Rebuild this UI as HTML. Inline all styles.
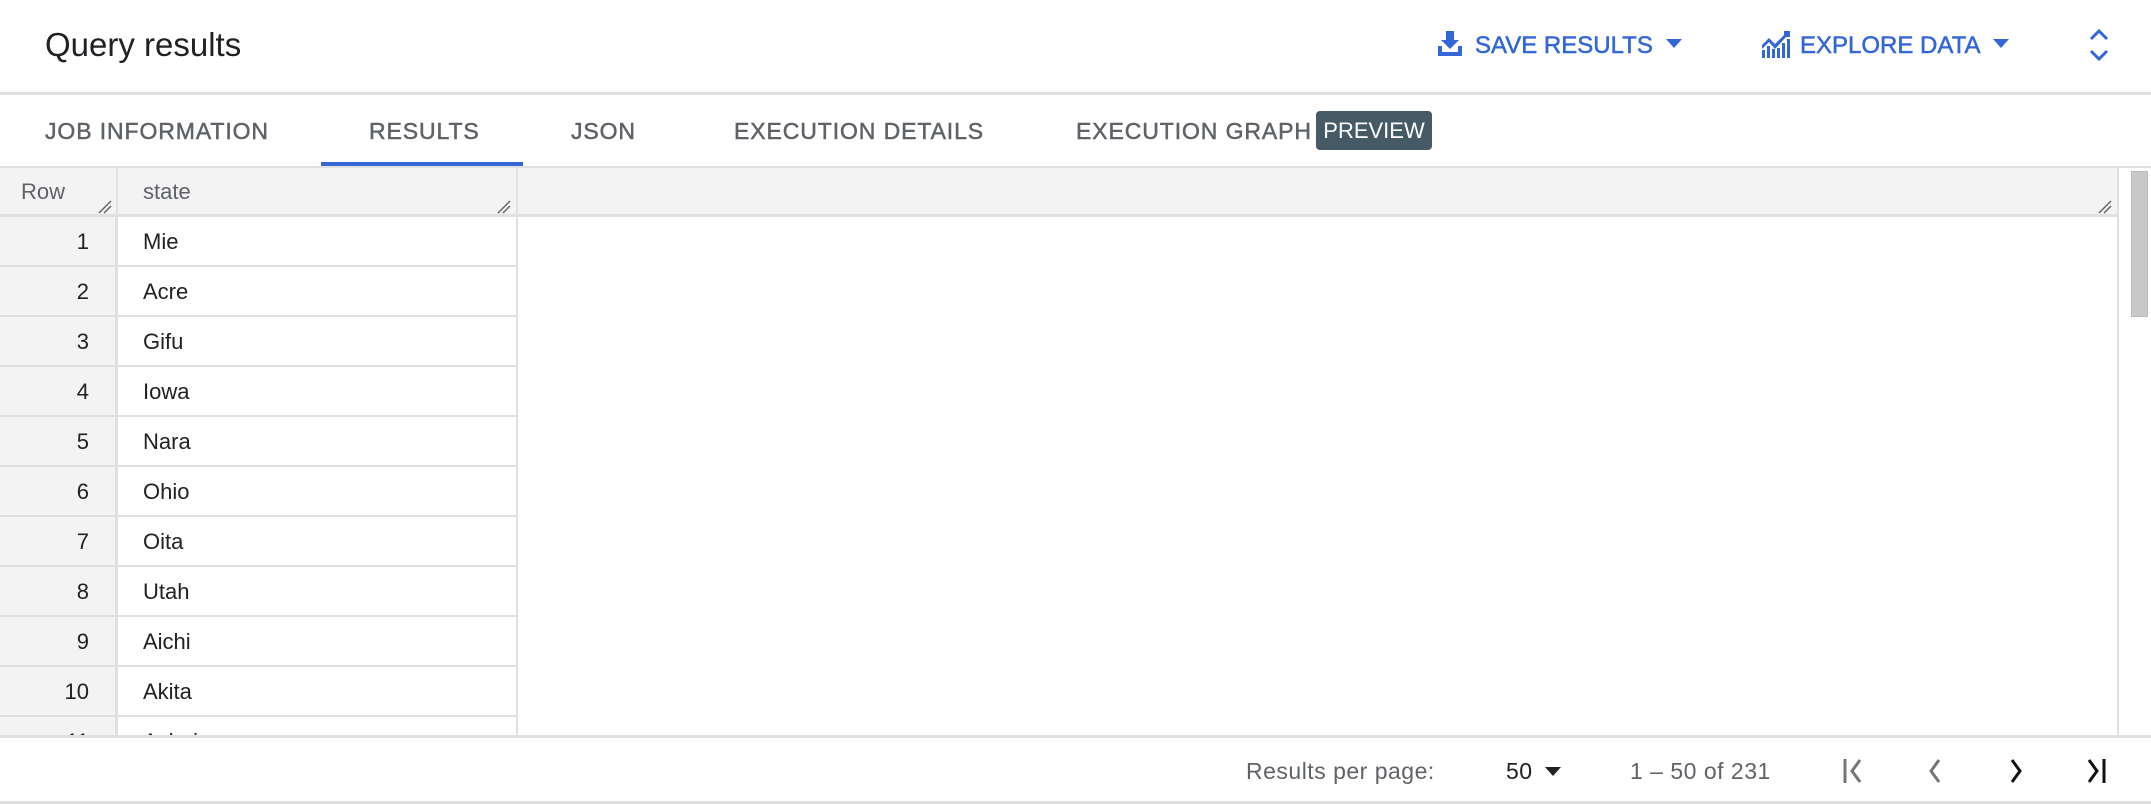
<!DOCTYPE html>
<html><head><meta charset="utf-8"><style>
*{margin:0;padding:0;box-sizing:border-box}
body{width:2151px;height:804px;overflow:hidden;background:#fff;font-family:"Liberation Sans",Arial,sans-serif;position:relative;color:#202124}
.a{position:absolute}
.blue{color:#3367d6}
.tab{position:absolute;top:118px;font-size:23px;color:#5f6368;white-space:nowrap;letter-spacing:0.9px;-webkit-text-stroke:0.5px currentColor}
.btn{-webkit-text-stroke:0.5px currentColor}
.hl{position:absolute;left:0;width:2151px;height:3px;background:#e0e0e0}
.row{position:absolute;left:0;height:50px;width:517px;border-bottom:2px solid #e0e0e0}
.row .n{position:absolute;left:0;top:0;width:117px;height:48px;background:#f3f3f3;border-right:2px solid #e0e0e0;text-align:right;padding-right:26px;line-height:50px;font-size:22px;color:#202124}
.row .s{position:absolute;left:143px;top:0;line-height:50px;font-size:22px;color:#202124}
.ft{position:absolute;top:758px;font-size:23px;color:#5f6368;white-space:nowrap;letter-spacing:0.5px}
</style></head><body>
<div class="a" style="left:45px;top:26px;font-size:33px;color:#202124">Query results</div>

<svg class="a" style="left:1436px;top:29px" width="28" height="28" viewBox="0 0 28 28"><path d="M10 2h8v9h5l-9 9-9-9h5z M2 17h4v6h16v-6h4v10H2z" fill="#3367d6"/></svg>
<div class="a blue btn" style="left:1475px;top:32px;font-size:24px">SAVE RESULTS</div>
<svg class="a" style="left:1666px;top:39px" width="16" height="10"><path d="M0 0h16L8 9z" fill="#3367d6"/></svg>

<svg class="a" style="left:1760px;top:29px" width="32" height="30" viewBox="0 0 32 30"><path d="M2 28V16l7-7 6 6 9-9V2h6v6h-4L15 20 9 13 2 20z" fill="#3367d6"/><rect x="2" y="21" width="3" height="8" fill="#3367d6"/><rect x="7" y="17" width="3" height="12" fill="#3367d6"/><rect x="12" y="20" width="3" height="9" fill="#3367d6"/><rect x="17" y="19" width="3" height="10" fill="#3367d6"/><rect x="22" y="14" width="3" height="15" fill="#3367d6"/><rect x="27" y="10" width="3" height="19" fill="#3367d6"/></svg>
<div class="a blue btn" style="left:1800px;top:32px;font-size:24px">EXPLORE DATA</div>
<svg class="a" style="left:1993px;top:39px" width="16" height="10"><path d="M0 0h16L8 9z" fill="#3367d6"/></svg>
<svg class="a" style="left:2088px;top:28px" width="22" height="34"><path d="M3 11l8-8 8 8M3 23l8 8 8-8" stroke="#3367d6" stroke-width="3" fill="none"/></svg>

<div class="hl" style="top:92px"></div>

<div class="tab" style="left:45px">JOB INFORMATION</div>
<div class="tab blue" style="left:369px">RESULTS</div>
<div class="tab" style="left:571px">JSON</div>
<div class="tab" style="left:734px">EXECUTION DETAILS</div>
<div class="tab" style="left:1076px">EXECUTION GRAPH</div>
<div class="a" style="left:1316px;top:111px;width:116px;height:39px;background:#455a64;border-radius:4px;color:#fff;font-size:22px;line-height:40px;text-align:center">PREVIEW</div>
<div class="a" style="left:321px;top:162px;width:202px;height:4px;background:#3367d6"></div>
<div class="hl" style="top:166px;height:2px"></div>

<div class="a" style="left:0;top:168px;width:2117px;height:49px;background:#f3f3f3;border-bottom:3px solid #e0e0e0"></div>
<div class="a" style="left:116px;top:168px;width:2px;height:569px;background:#e0e0e0"></div>
<div class="a" style="left:516px;top:168px;width:2px;height:569px;background:#e0e0e0"></div>
<div class="a" style="left:2117px;top:168px;width:2px;height:569px;background:#e0e0e0"></div>
<div class="a" style="left:21px;top:179px;font-size:22px;color:#5f6368">Row</div>
<div class="a" style="left:143px;top:179px;font-size:22px;color:#5f6368">state</div>
<svg class="a" style="left:98px;top:200px" width="14" height="14"><path d="M1 13L13 1M6 13L13 6" stroke="#666" stroke-width="1.5"/></svg>
<svg class="a" style="left:497px;top:200px" width="14" height="14"><path d="M1 13L13 1M6 13L13 6" stroke="#666" stroke-width="1.5"/></svg>
<svg class="a" style="left:2098px;top:200px" width="14" height="14"><path d="M1 13L13 1M6 13L13 6" stroke="#666" stroke-width="1.5"/></svg>
<div class="a" style="left:2131px;top:171px;width:17px;height:146px;background:#c8c8c8;border:1px solid #bbb"></div>

<div class="a" style="left:0;top:217px;width:518px;height:520px;overflow:hidden">
<div class="row" style="top:0"><div class="n">1</div><div class="s">Mie</div></div>
<div class="row" style="top:50px"><div class="n">2</div><div class="s">Acre</div></div>
<div class="row" style="top:100px"><div class="n">3</div><div class="s">Gifu</div></div>
<div class="row" style="top:150px"><div class="n">4</div><div class="s">Iowa</div></div>
<div class="row" style="top:200px"><div class="n">5</div><div class="s">Nara</div></div>
<div class="row" style="top:250px"><div class="n">6</div><div class="s">Ohio</div></div>
<div class="row" style="top:300px"><div class="n">7</div><div class="s">Oita</div></div>
<div class="row" style="top:350px"><div class="n">8</div><div class="s">Utah</div></div>
<div class="row" style="top:400px"><div class="n">9</div><div class="s">Aichi</div></div>
<div class="row" style="top:450px"><div class="n">10</div><div class="s">Akita</div></div>
<div class="row" style="top:500px"><div class="n">11</div><div class="s">Ashai</div></div>
</div>

<div class="hl" style="top:735px"></div>
<div class="ft" style="left:1246px">Results per page:</div>
<div class="ft" style="left:1506px;color:#202124">50</div>
<svg class="a" style="left:1545px;top:767px" width="16" height="10"><path d="M0 0h16L8 9z" fill="#202124"/></svg>
<div class="ft" style="left:1630px">1 – 50 of 231</div>
<svg class="a" style="left:1842px;top:756px" width="24" height="30"><path d="M3 3v24" stroke="#757575" stroke-width="3"/><path d="M18 4l-8 11 8 11" stroke="#757575" stroke-width="3" fill="none"/></svg>
<svg class="a" style="left:1925px;top:756px" width="20" height="30"><path d="M14 4l-8 11 8 11" stroke="#757575" stroke-width="3" fill="none"/></svg>
<svg class="a" style="left:2006px;top:756px" width="20" height="30"><path d="M6 4l8 11-8 11" stroke="#111" stroke-width="3" fill="none"/></svg>
<svg class="a" style="left:2084px;top:756px" width="24" height="30"><path d="M5 4l8 11-8 11" stroke="#111" stroke-width="3" fill="none"/><path d="M20 3v24" stroke="#111" stroke-width="3"/></svg>
<div class="hl" style="top:801px"></div>
</body></html>
